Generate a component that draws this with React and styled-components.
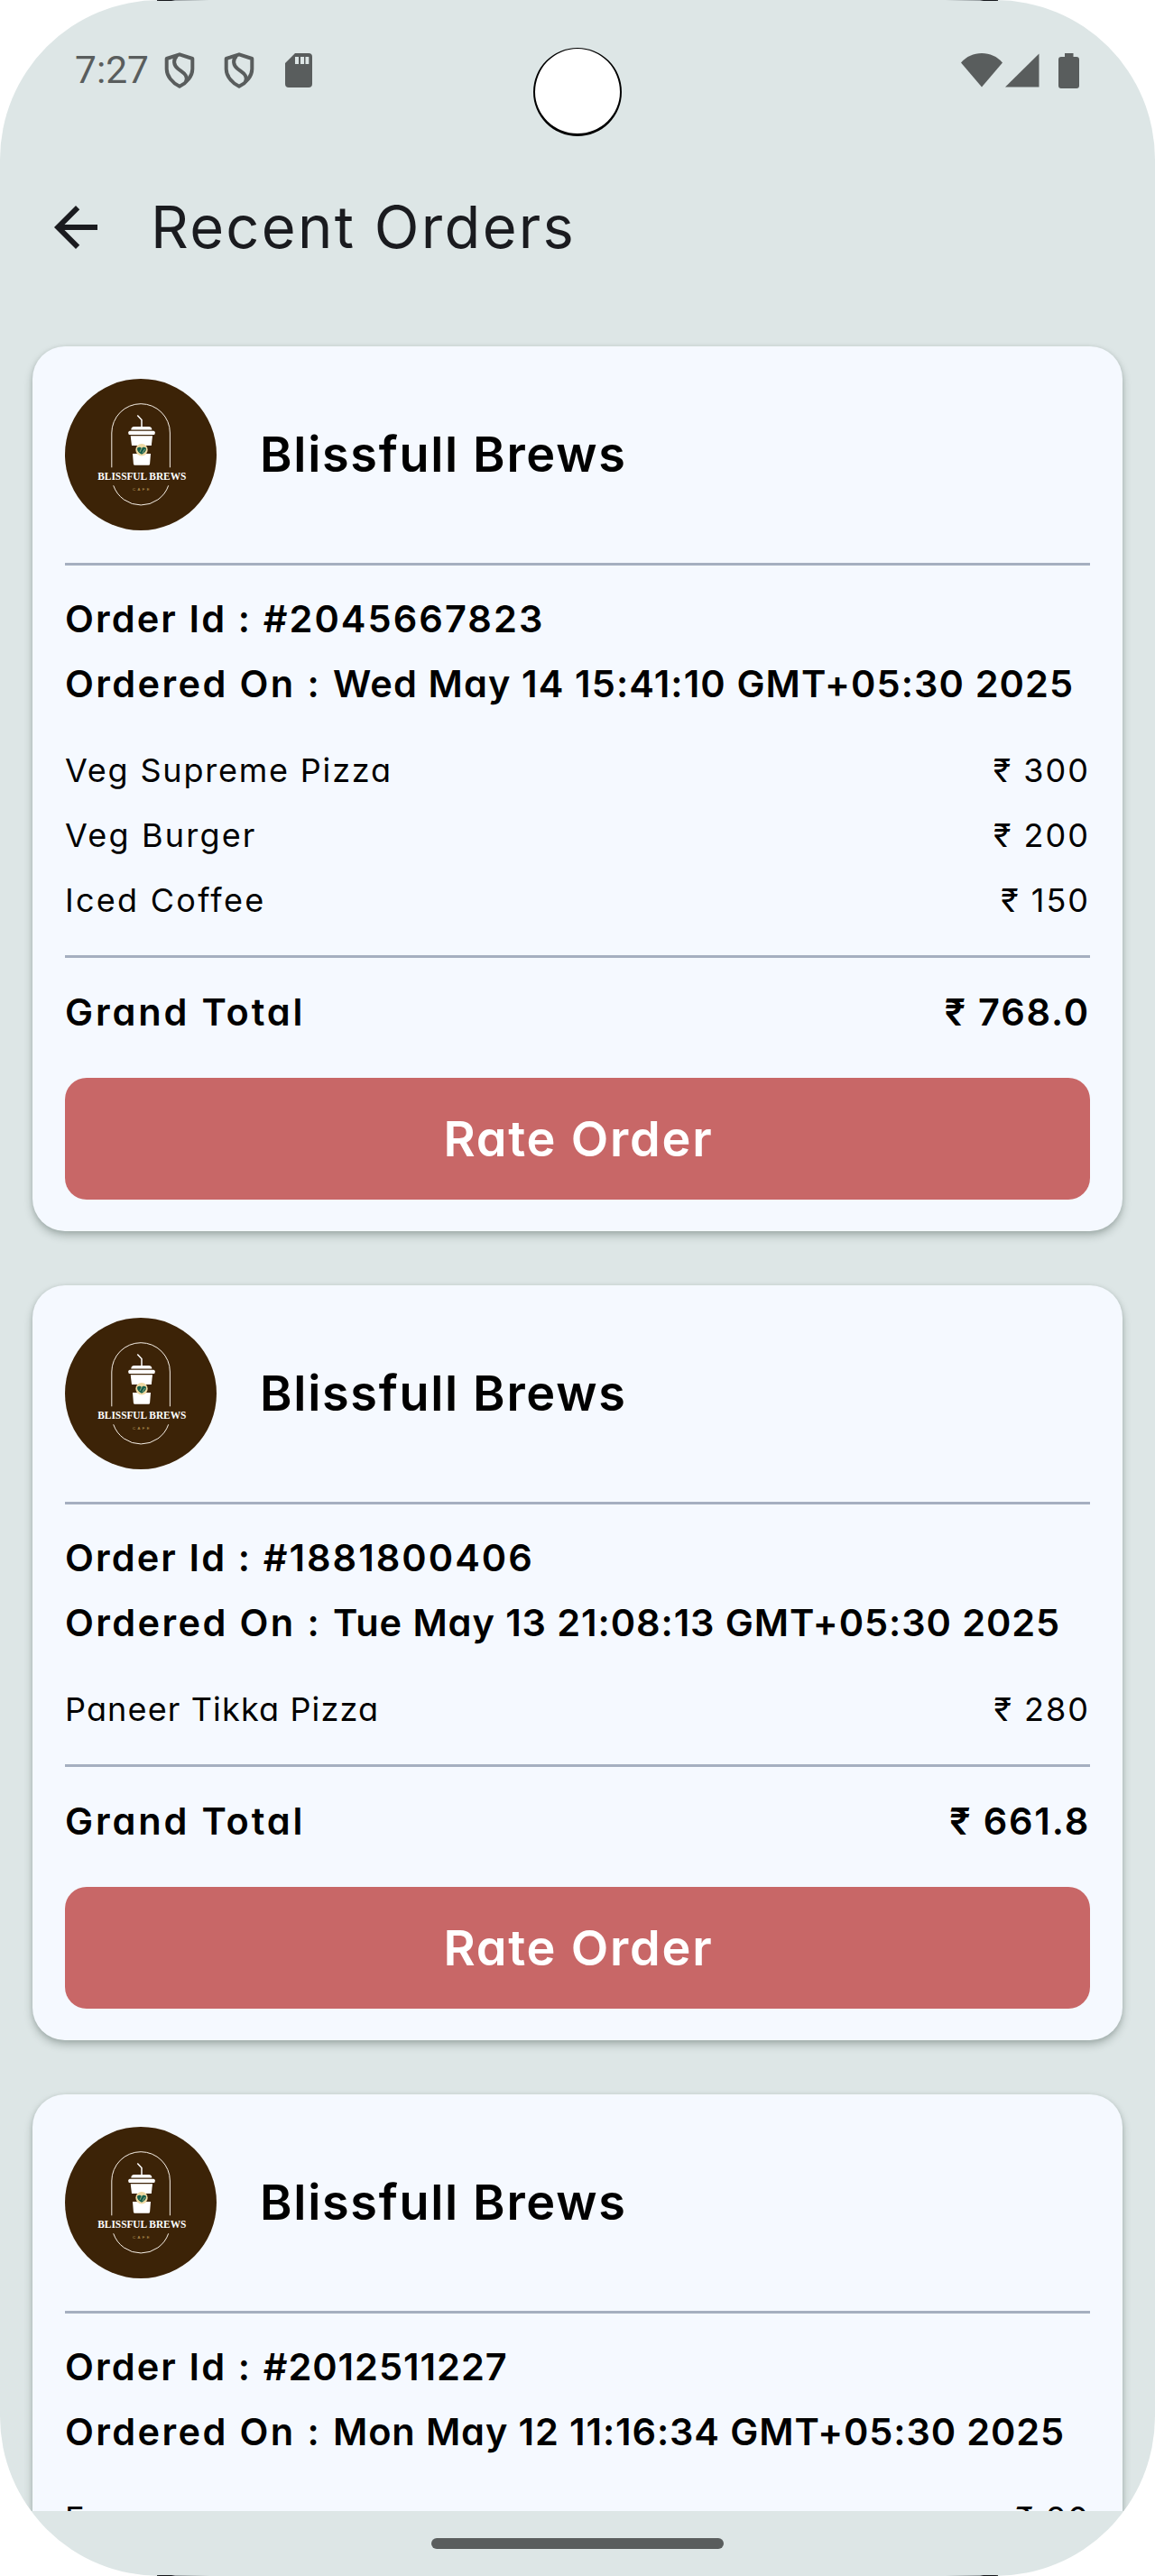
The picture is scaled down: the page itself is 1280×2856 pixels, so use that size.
import React from 'react';
import styled, { createGlobalStyle } from 'styled-components';

const GlobalStyle = createGlobalStyle`
  *, *::before, *::after { box-sizing: border-box; }
  body { margin: 0; background: #ffffff; }
`;

const Screen = styled.main`
  position: relative;
  display: flex;
  flex-direction: column;
  width: 1280px;
  height: 2856px;
  overflow: hidden;
  border-radius: 177px;
  background: #dde6e6;
  color: #000000;
  font-family: Inter, "Open Sans", sans-serif;
  font-feature-settings: "cv11";
  white-space: nowrap;
`;

const EdgeGlint = styled.i`
  position: absolute;
  ${(p) => (p.$bottom ? 'bottom: 0;' : 'top: 0;')}
  ${(p) => (p.$right ? 'right: 174px;' : 'left: 174px;')}
  width: 58px;
  height: 1px;
  background: linear-gradient(
    ${(p) => (p.$right ? 'to left' : 'to right')},
    #16181c 0 16px,
    #969da0 20px,
    #dde6e6 100%
  );
`;

const StatusBar = styled.header`
  display: flex;
  flex: none;
  align-items: center;
  justify-content: space-between;
  height: 156px;
  padding: 0 84px 0 83px;
  color: #595d5d;
`;

const StatusGroup = styled.div`
  display: flex;
  align-items: center;
`;

const Clock = styled.time`
  width: 67px;
  font: 400 42.5px/1 Roboto, sans-serif;
`;

const StatusIcon = styled.svg`
  display: block;
  flex: none;
  width: ${(p) => p.$w}px;
  height: ${(p) => p.$h}px;
  margin-left: ${(p) => p.$before || 0}px;
`;

const Camera = styled.div`
  position: absolute;
  top: 53px;
  left: 591px;
  width: 98px;
  height: 98px;
  border: 2px solid #000000;
  border-top-width: 1.5px;
  border-bottom-width: 3px;
  border-radius: 50%;
  background: #ffffff;
`;

const AppBar = styled.div`
  display: flex;
  flex: none;
  align-items: center;
  gap: 47px;
  height: 192px;
  padding-left: 48px;
  color: #1a1b1f;
`;

const BackButton = styled.button`
  display: grid;
  width: 72px;
  height: 72px;
  padding: 0;
  border: 0;
  background: none;
  color: inherit;
`;

const Title = styled.h1`
  margin: 0;
  font-size: 65px;
  font-weight: 400;
  line-height: 1.2;
  letter-spacing: 2.3px;
`;

const OrderList = styled.section`
  display: flex;
  flex: 1;
  flex-direction: column;
  gap: 60px;
  min-height: 0;
  padding: 36px 36px 0;
  overflow: hidden;
`;

const Card = styled.article`
  flex: none;
  padding: 36px 36px 35px;
  border-radius: 36px;
  background: #f5f9ff;
  box-shadow: 0 5px 10px rgba(20, 40, 30, 0.26), 0 1px 5px rgba(20, 40, 30, 0.1);
`;

const Restaurant = styled.div`
  display: flex;
  align-items: center;
  gap: 48px;
  height: 168px;
  margin-bottom: 36px;
`;

const Logo = styled.svg`
  display: block;
  width: 168px;
  height: 168px;
`;

const Name = styled.h2`
  margin: 0;
  font-size: 54px;
  font-weight: 600;
  line-height: 1.2;
  letter-spacing: 1.7px;
`;

const Divider = styled.hr`
  height: 3px;
  margin: 0;
  border: 0;
  background: #a5afc0;
`;

const Details = styled.div`
  padding: 24px 0 23px;
`;

const DetailLine = styled.p`
  height: 72px;
  margin: 0;
  font-size: 41.5px;
  font-weight: 600;
  line-height: 71px;
`;

const Tracked = styled.span`
  white-space: pre;
  letter-spacing: ${(p) => p.$track}px;
`;

const Items = styled.ul`
  margin: 0;
  padding: 0 0 25px;
  list-style: none;
`;

const Row = styled.li`
  display: flex;
  justify-content: space-between;
  font-size: 36px;
  font-weight: 400;
  line-height: 72px;
`;

const TotalRow = styled.div`
  display: flex;
  justify-content: space-between;
  padding: 24px 0 37px;
  font-size: 41.5px;
  font-weight: 600;
  line-height: 72px;
`;

const Price = styled.span`
  letter-spacing: ${(p) => p.$track || 2}px;
`;

const RateButton = styled.button`
  display: block;
  width: 100%;
  height: 135px;
  padding: 0 0 0 2px;
  border: 0;
  border-radius: 24px;
  background: #c86767;
  color: #ffffff;
  font: inherit;
  font-feature-settings: inherit;
  font-size: 54px;
  font-weight: 600;
  letter-spacing: 1.8px;
`;

const GestureBar = styled.footer`
  display: flex;
  flex: none;
  align-items: center;
  justify-content: center;
  height: 72px;
`;

const Handle = styled.div`
  width: 324px;
  height: 12px;
  border-radius: 6px;
  background: #595d5d;
`;

const ORDERS = [
  {
    id: '#2045667823', idTrack: 2.07,
    date: 'Wed May 14 15:41:10 GMT+05:30 2025', dateTrack: 1.11,
    items: [
      { name: 'Veg Supreme Pizza', price: 300, track: 1.8 },
      { name: 'Veg Burger', price: 200, track: 2.2 },
      { name: 'Iced Coffee', price: 150, track: 2.27 },
    ],
    total: '768.0',
  },
  {
    id: '#1881800406', idTrack: 2.03,
    date: 'Tue May 13 21:08:13 GMT+05:30 2025', dateTrack: 0.92,
    items: [{ name: 'Paneer Tikka Pizza', price: 280, track: 1.14 }],
    total: '661.8',
  },
  {
    id: '#2012511227', idTrack: 0.98,
    date: 'Mon May 12 11:16:34 GMT+05:30 2025', dateTrack: 0.89,
    items: [{ name: 'Espresso', price: 80, track: 1.8 }],
    total: '184.0',
  },
];

function ShieldIcon({ before }) {
  return (
    <StatusIcon $w={34} $h={40} $before={before} viewBox="0 0 34 40" fill="none" stroke="currentColor" strokeWidth="4" strokeLinejoin="round">
      <path d="M17 2.300 31.300 7v11.500C31.300 26 25.500 33.500 17 37.800 8.500 33.500 2.700 26 2.700 18.500V7Z" />
      <path d="M14 4C9.500 8.500 10.500 14 15 18c4.500 4 12.500 7 9 15" />
    </StatusIcon>
  );
}

function CafeLogo() {
  return (
    <Logo viewBox="0 0 168 168">
      <circle cx="84" cy="84" r="84" fill="#3c2307" />
      <g fill="none" stroke="#f6efe6" strokeWidth="1">
        <path d="M51.800 98.300V60a32.300 32.300 0 0 1 64.600 0v38.300" />
        <path d="M53.700 118.300a32.300 32.300 0 0 0 61 0" />
        <path d="m80.300 40.500 4.700 5V54" stroke="#fff" strokeWidth="1.500" />
      </g>
      <g fill="#fff">
        <path d="M73.300 56.500c0-2.300 1-3.500 3.500-3.500h16c2.500 0 3.500 1.200 3.500 3.500z" />
        <rect x="70.300" y="57.800" width="29.400" height="4.200" rx="1.500" />
        <path d="M72.700 63.200H97L95.800 74H74z" />
        <path d="M75 83h20l-.9 11.300q-.1 1.500-1.600 1.500h-15q-1.500 0-1.600-1.500z" />
      </g>
      <circle cx="85" cy="78.700" r="6.700" fill="#efd9a3" />
      <path d="M85 83.800c-3-1.500-5.200-3.800-5-6.200.2-2 3.300-2.600 5-.6 1.700-2 4.800-1.400 5 .6.200 2.400-2 4.700-5 6.200z" fill="#17604c" />
      <path d="m83 81 2-4M86 82l2.500-4" stroke="#efd9a3" strokeWidth=".6" />
      <text x="36.300" y="112.300" fill="#fff" fontFamily="Liberation Serif, serif" fontSize="12" fontWeight="700" textLength="98" lengthAdjust="spacingAndGlyphs">
        BLISSFUL BREWS
      </text>
      <text x="75" y="124" fill="#c9a463" fontFamily="Liberation Sans, sans-serif" fontSize="4.200" textLength="18.500">
        CAFE
      </text>
    </Logo>
  );
}

function OrderCard({ order }) {
  return (
    <Card>
      <Restaurant>
        <CafeLogo />
        <Name>Blissfull Brews</Name>
      </Restaurant>
      <Divider />
      <Details>
        <DetailLine>
          <Tracked $track={2.12}>{'Order Id : '}</Tracked>
          <Tracked $track={order.idTrack}>{order.id}</Tracked>
        </DetailLine>
        <DetailLine>
          <Tracked $track={2.4}>{'Ordered On : '}</Tracked>
          <Tracked $track={order.dateTrack}>{order.date}</Tracked>
        </DetailLine>
      </Details>
      <Items>
        {order.items.map((item) => (
          <Row key={item.name}>
            <Tracked $track={item.track}>{item.name}</Tracked>
            <Price>₹ {item.price}</Price>
          </Row>
        ))}
      </Items>
      <Divider />
      <TotalRow>
        <Tracked $track={2.87}>Grand Total</Tracked>
        <Price $track={1.8}>₹ {order.total}</Price>
      </TotalRow>
      <RateButton type="button">Rate Order</RateButton>
    </Card>
  );
}

export default function App() {
  return (
    <>
      <GlobalStyle />
      <Screen>
        <StatusBar>
          <StatusGroup>
            <Clock>7:27</Clock>
            <ShieldIcon before={32} />
            <ShieldIcon before={32} />
            <StatusIcon $w={30} $h={38} $before={34} viewBox="0 0 30 38" fill="currentColor">
              <path fillRule="evenodd" d="M11 0h15a4 4 0 0 1 4 4v30a4 4 0 0 1-4 4H4a4 4 0 0 1-4-4V11zM11 4v8h4V4zM17 4v8h4V4zM22.500 4v8h3.800V4z" />
            </StatusIcon>
          </StatusGroup>
          <StatusGroup>
            <StatusIcon $w={46} $h={38} viewBox="0 0 46 38" fill="currentColor">
              <path d="M23 37.500 0 10.500C6 3.500 14 0 23 0s17 3.500 23 10.500z" />
            </StatusIcon>
            <StatusIcon $w={38} $h={38} $before={3} viewBox="0 0 38 38" fill="currentColor">
              <path d="M0 37.500 37.500.5v37z" />
            </StatusIcon>
            <StatusIcon $w={23} $h={39} $before={21} viewBox="0 0 23 39" fill="currentColor">
              <path d="M7 0h9.500v4H20a3 3 0 0 1 3 3v29a3 3 0 0 1-3 3H3a3 3 0 0 1-3-3V7a3 3 0 0 1 3-3h4z" />
            </StatusIcon>
          </StatusGroup>
        </StatusBar>
        <AppBar>
          <BackButton type="button" aria-label="Back">
            <svg width="72" height="72" viewBox="0 0 24 24" fill="currentColor">
              <path d="M20 11H7.830l5.590-5.590L12 4l-8 8 8 8 1.410-1.410L7.830 13H20z" />
            </svg>
          </BackButton>
          <Title>Recent Orders</Title>
        </AppBar>
        <OrderList>
          {ORDERS.map((order) => (
            <OrderCard key={order.id} order={order} />
          ))}
        </OrderList>
        <GestureBar>
          <Handle />
        </GestureBar>
        <Camera />
        <EdgeGlint />
        <EdgeGlint $right />
        <EdgeGlint $bottom />
        <EdgeGlint $right $bottom />
      </Screen>
    </>
  );
}
